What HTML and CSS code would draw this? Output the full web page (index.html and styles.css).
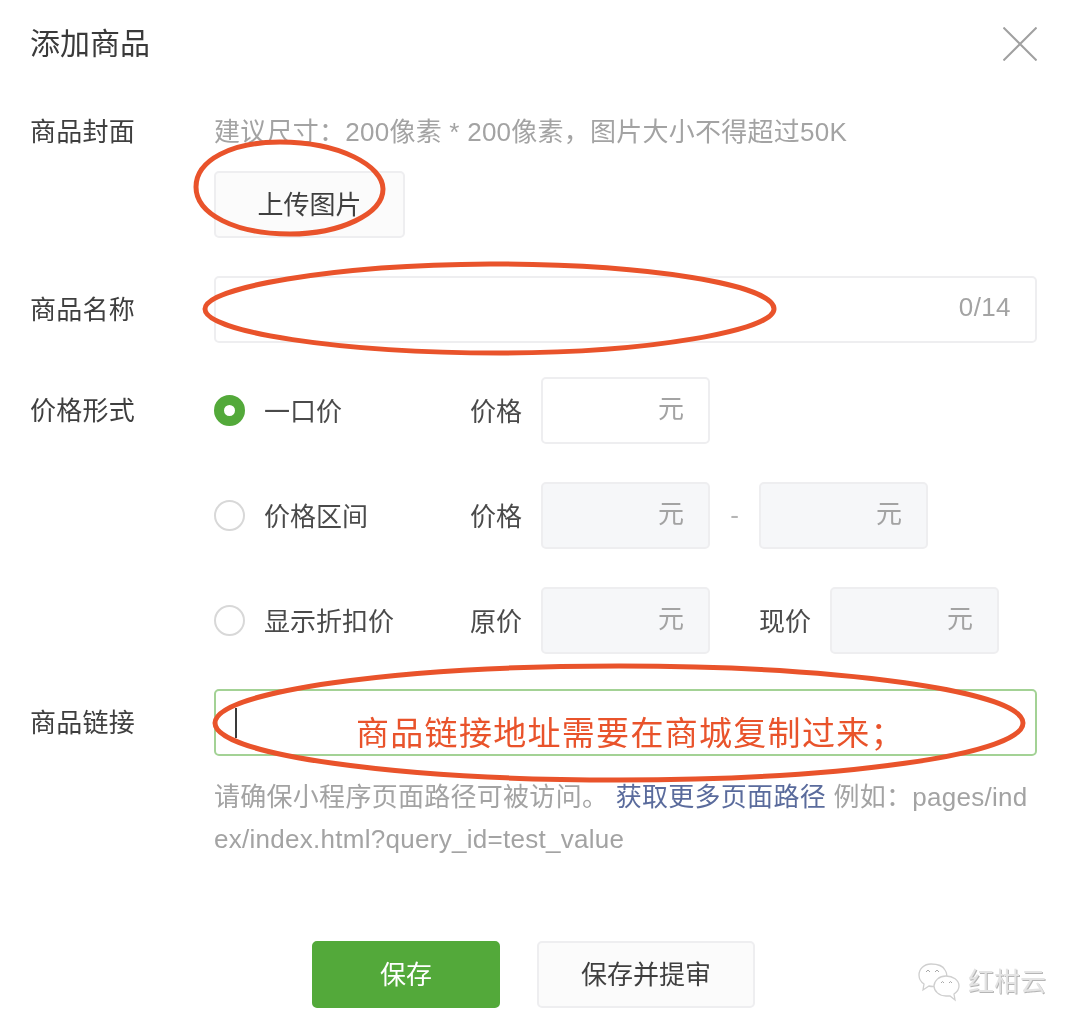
FILE: index.html
```html
<!DOCTYPE html>
<html lang="zh-CN">
<head>
<meta charset="utf-8">
<title>添加商品</title>
<link rel="stylesheet" href="styles.css">
</head>
<body>
<main class="dialog">
  <header class="head">
    <h1 class="title">添加商品</h1>
    <svg class="close" viewBox="0 0 34 34" width="34" height="34"><path d="M0.500 0.500L33.500 33.500M33.500 0.500L0.500 33.500"/></svg>
  </header>

  <section class="row row-cover">
    <div class="label">商品封面</div>
    <div class="content">
      <div class="hint">建议尺寸：200像素 * 200像素，图片大小不得超过50K</div>
      <button class="btn upload">上传图片</button>
    </div>
  </section>

  <section class="row row-name">
    <div class="label">商品名称</div>
    <div class="content"><div class="input wide"><span class="unit count">0/14</span></div></div>
  </section>

  <section class="row row-price">
    <div class="label">价格形式</div>
    <div class="content price-list">
      <div class="price-line">
        <div class="option"><span class="radio on"></span><span class="otext">一口价</span></div>
        <span class="flabel">价格</span>
        <div class="input small"><span class="unit">元</span></div>
      </div>
      <div class="price-line">
        <div class="option"><span class="radio"></span><span class="otext">价格区间</span></div>
        <span class="flabel">价格</span>
        <div class="input small off"><span class="unit">元</span></div>
        <span class="dash">-</span>
        <div class="input small off"><span class="unit">元</span></div>
      </div>
      <div class="price-line">
        <div class="option"><span class="radio"></span><span class="otext">显示折扣价</span></div>
        <span class="flabel">原价</span>
        <div class="input small off"><span class="unit">元</span></div>
        <span class="flabel now">现价</span>
        <div class="input small off"><span class="unit">元</span></div>
      </div>
    </div>
  </section>

  <section class="row row-link">
    <div class="label link-label">商品链接</div>
    <div class="content">
      <div class="input wide focus"><span class="caret"></span></div>
      <p class="help">请确保小程序页面路径可被访问。 <a class="more">获取更多页面路径</a> 例如：pages/index/index.html?query_id=test_value</p>
    </div>
  </section>

  <footer class="actions">
    <button class="btn primary">保存</button>
    <button class="btn second">保存并提审</button>
  </footer>
</main>

<svg class="marks" viewBox="0 0 1080 1029" width="1080" height="1029">
  <path d="M196 187C196 160 232 142 280 142C340 142 383 166 383 189C383 214 340 234 290 234C235 234 196 214 196 187Z"/>
  <path d="M205 309C205 288 330 265 490 264C650 264 774 285 774 309C774 330 650 353 500 353C340 353 205 332 205 309Z"/>
  <ellipse cx="619" cy="723" rx="404" ry="57"/>
</svg>
<div class="note">商品链接地址需要在商城复制过来；</div>

<div class="watermark">
  <svg viewBox="0 0 44 40" width="44" height="40" class="wm-icon">
    <path class="b" d="M14 2C7 2 2 7 2 13c0 4 2 7 5 9l-1 6 6-4c4 1 8 0 10-1 7-3 10-9 6-15C26 4 20 2 14 2z"/>
    <path class="b" d="M29 14c-7 0-12 5-12 10s5 10 12 10c2 0 3 0 4 0l5 4-1-6c3-2 5-5 5-8 0-6-6-10-13-10z"/>
    <path class="d" d="M9 10l2-2 2 2M18 10l2-2 2 2M24 21l1.500-1.500L27 21M32 21l1.500-1.500L35 21"/>
  </svg>
  <span class="wm-text">红柑云</span>
</div>
</body>
</html>
```

FILE: styles.css
```css
* { box-sizing: border-box; }
html, body { margin: 0; padding: 0; background: #fff; }
body {
  position: relative;
  width: 1080px;
  height: 1029px;
  overflow: hidden;
  font-family: "Liberation Sans", "Noto Sans CJK SC", sans-serif;
  font-size: 26px;
  color: #3f3f3f;
  filter: blur(0.45px);
}
.dialog { padding: 23px 43px 0 30px; }
.head { display: flex; justify-content: space-between; align-items: center; height: 42px; }
.title { margin: 0; font-size: 30px; font-weight: 400; line-height: 42px; color: #3a3a3a; }
.close { fill: none; stroke: #a0a0a0; stroke-width: 2; }
.close path { fill: none; }

.row { display: flex; }
.label { width: 184px; flex: none; line-height: 42px; color: #3f3f3f; letter-spacing: 0.25px; }
.content { flex: 1; min-width: 0; }
.row-cover { margin-top: 46px; }
.hint { line-height: 42px; color: #a3a3a3; letter-spacing: 0.25px; }

.btn {
  display: block;
  height: 67px;
  border-radius: 5px;
  border: 2px solid #eeeef0;
  background: #fbfbfb;
  font: inherit;
  color: #3f3f3f;
  padding: 0 0 4px;
}
.upload { width: 191px; margin-top: 18px; }

.row-name { margin-top: 38px; align-items: center; }
.input {
  display: flex;
  align-items: center;
  justify-content: flex-end;
  height: 67px;
  border: 2px solid #eeeef0;
  border-radius: 5px;
  background: #fff;
  padding-right: 24px;
}
.unit { color: #a3a3a3; }
.count { letter-spacing: 0.4px; }
.wide { padding-bottom: 4px; }
.small { width: 169px; flex: none; padding-bottom: 8px; }
.off { background: #f6f7f9; }

.row-price { margin-top: 34px; }
.row-price .label { margin-top: 13px; }
.price-list { display: flex; flex-direction: column; gap: 38px; }
.price-line { display: flex; align-items: center; }
.option { display: flex; align-items: center; width: 256px; flex: none; color: #4a4a4a; }
.otext { margin-bottom: 3px; }
.radio {
  width: 31px;
  height: 31px;
  flex: none;
  margin-right: 19px;
  border-radius: 50%;
  border: 2px solid #d8d8d8;
  background: #fff;
}
.radio.on { border: 10px solid #53a93a; background: #fff; }
.flabel { width: 71px; flex: none; color: #4a4a4a; margin-bottom: 3px; }
.flabel.now { width: 71px; margin-left: 49px; }
.dash { width: 49px; text-align: center; color: #b5b5b5; }

.row-link { margin-top: 35px; }
.link-label { margin-top: 13px; }
.focus { border-color: #a3d295; justify-content: flex-start; padding: 0 0 0 19px; }
.caret { width: 2px; height: 30px; background: #3a3a3a; }
.help {
  margin: 20px 0 0;
  line-height: 42px;
  color: #a3a3a3;
  letter-spacing: 0.28px;
  word-break: break-all;
}
.more { color: #5a6b9c; }

.actions { display: flex; gap: 37px; padding-left: 282px; margin-top: 81px; }
.primary { width: 188px; background: #53a93a; border-color: #53a93a; color: #fff; }
.second { width: 218px; }

.marks { position: absolute; left: 0; top: 0; fill: none; stroke: #e9532b; stroke-width: 5; }
.note {
  position: absolute;
  left: 356px;
  top: 711px;
  font-size: 33px;
  line-height: 46px;
  letter-spacing: 1.300px;
  color: #e9532b;
  white-space: nowrap;
}

.watermark { position: absolute; left: 917px; top: 962px; display: flex; align-items: center; gap: 7px; }
.wm-icon { flex: none; }
.wm-icon .b { fill: #fff; stroke: #cfcfcf; stroke-width: 1.300; }
.wm-icon .d { fill: none; stroke: #a8a8a8; stroke-width: 1; }
.wm-text { font-size: 26px; line-height: 40px; color: #e4e4e4; text-shadow: 1px 1px 0 #b5b5b5; }
```
